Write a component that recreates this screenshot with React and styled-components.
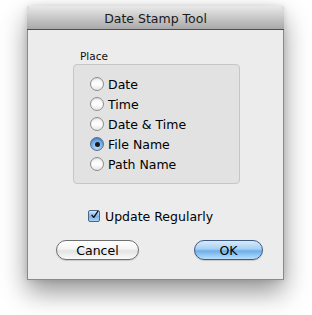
import React from 'react'
import styled, { createGlobalStyle } from 'styled-components'

const Global = createGlobalStyle`
  html, body { margin: 0; padding: 0; background: #fff; }
  body { font-family: "DejaVu Sans", "Liberation Sans", sans-serif; }
`

const places = ['Date', 'Time', 'Date & Time', 'File Name', 'Path Name']

function Radio({ label, checked }) {
  return (
    <RadioRow>
      <RadioCircle $checked={checked}>{checked && <Dot />}</RadioCircle>
      <span>{label}</span>
    </RadioRow>
  )
}

export default function App() {
  return (
    <Page>
      <Global />
      <Window>
        <TitleBar>Date Stamp Tool</TitleBar>
        <Body>
          <Section>
            <Legend>Place</Legend>
            <GroupBox>
              {places.map(p => (
                <Radio key={p} label={p} checked={p === 'File Name'} />
              ))}
            </GroupBox>
          </Section>
          <CheckRow>
            <CheckBox>
              <svg width="12" height="12" viewBox="0 0 12 12">
                <path d="M2.5 6.2 L5 9.2 L10.5 1.2" fill="none" stroke="#111" strokeWidth="1.8" strokeLinecap="round" strokeLinejoin="round" />
              </svg>
            </CheckBox>
            <span>Update Regularly</span>
          </CheckRow>
          <Buttons>
            <Button $w={83}>Cancel</Button>
            <Button $w={69} $primary>OK</Button>
          </Buttons>
        </Body>
      </Window>
    </Page>
  )
}

const Page = styled.div`
  padding: 6px 0 0 27px;
  height: 309px;
`

const Window = styled.div`
  width: 257px;
  height: 274px;
  display: flex;
  flex-direction: column;
  background: #ececec;
  border: 1px solid #8a8a8a;
  border-top: none;
  border-radius: 4px 4px 0 0;
  box-sizing: border-box;
  box-shadow: 0 12px 26px rgba(0, 0, 0, 0.42), 0 0 6px rgba(0, 0, 0, 0.12);
`

const TitleBar = styled.div`
  height: 22px;
  margin: 0 -1px;
  border-radius: 4px 4px 0 0;
  border-bottom: 1px solid #4e4e4e;
  background: linear-gradient(#e9e9e9, #cfcfcf 40%, #a9a9a9);
  display: flex;
  align-items: center;
  justify-content: center;
  font-size: 12.5px;
  color: #1a1a1a;
  padding-top: 1px;
`

const Body = styled.div`
  flex: 1;
  display: flex;
  flex-direction: column;
  padding: 20px 20px 19px 28px;
`

const Section = styled.div`
  margin-left: 17px;
  width: 167px;
`

const Legend = styled.div`
  font-size: 10.5px;
  color: #111;
  line-height: 13px;
  margin-left: 7px;
  margin-bottom: 1px;
`

const GroupBox = styled.div`
  box-sizing: border-box;
  height: 120px;
  border: 1px solid #c6c6c6;
  border-radius: 4px;
  background: #e2e2e2;
  padding: 9px 0 0 16px;
  display: flex;
  flex-direction: column;
`

const RadioRow = styled.div`
  height: 20px;
  display: flex;
  align-items: center;
  gap: 4px;
  font-size: 12.5px;
  color: #000;
`

const RadioCircle = styled.div`
  width: 14px;
  height: 14px;
  box-sizing: border-box;
  border-radius: 50%;
  border: 1px solid ${p => (p.$checked ? '#5a6f8f' : '#8e8e8e')};
  background: ${p =>
    p.$checked
      ? 'radial-gradient(circle at 50% 75%, #bfe3ff, #6aa8e6 60%, #3d78c4)'
      : 'linear-gradient(#f2f2f2, #ffffff 55%, #e4e4e4)'};
  box-shadow: inset 0 1px 1px rgba(0, 0, 0, 0.12);
  display: flex;
  align-items: center;
  justify-content: center;
`

const Dot = styled.div`
  width: 5px;
  height: 5px;
  border-radius: 50%;
  background: #1b1b1b;
`

const CheckRow = styled.div`
  margin-top: 25px;
  margin-left: 32px;
  display: flex;
  align-items: center;
  gap: 5px;
  height: 14px;
  font-size: 12.5px;
  color: #000;
`

const CheckBox = styled.div`
  width: 12px;
  height: 12px;
  box-sizing: border-box;
  border: 1px solid #4f6584;
  border-radius: 2px;
  background: linear-gradient(#cfe6fb, #7fb3e8 55%, #a9d2f7);
  display: flex;
  align-items: center;
  justify-content: center;
  svg { display: block; margin-top: -2px; margin-left: 1px; }
`

const Buttons = styled.div`
  margin-top: auto;
  display: flex;
  justify-content: space-between;
`

const Button = styled.button`
  width: ${p => p.$w}px;
  height: 20px;
  border-radius: 10px;
  font-family: inherit;
  font-size: 12.5px;
  color: #000;
  padding: 0;
  cursor: default;
  border: 1px solid ${p => (p.$primary ? '#3d5a85' : '#6f6f6f')};
  background: ${p =>
    p.$primary
      ? 'linear-gradient(#d7ebfc, #a6cff3 45%, #6caee9 55%, #b8e0fc)'
      : 'linear-gradient(#ffffff, #f4f4f4 45%, #e3e3e3 55%, #fafafa)'};
  box-shadow: 0 1px 1px rgba(0, 0, 0, 0.15);
`
